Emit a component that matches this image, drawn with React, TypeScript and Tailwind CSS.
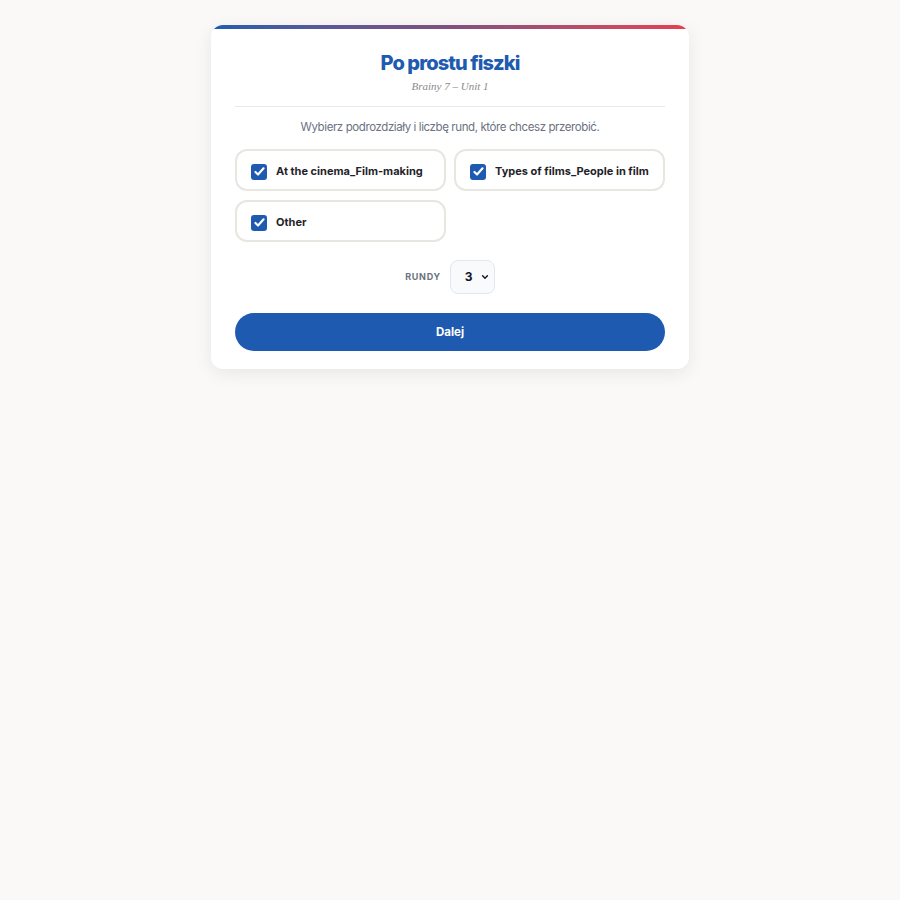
import React, { useState } from "react";

const sections = ["At the cinema_Film-making", "Types of films_People in film", "Other"];

const App = () => {
  const [checked, setChecked] = useState<boolean[]>([true, true, true]);
  const [rounds, setRounds] = useState("3");

  const toggle = (i: number) => {
    setChecked((prev) => prev.map((v, j) => (j === i ? !v : v)));
  };

  return (
    <div
      className="min-h-screen bg-[#faf9f7] pt-[25px]"
      style={{ fontFamily: "Inter, 'Noto Sans', sans-serif" }}
    >
      <div className="mx-auto w-[478px] overflow-hidden rounded-xl bg-white shadow-[0_4px_18px_rgba(0,0,0,0.08)]">
        <div className="h-1 bg-gradient-to-r from-[#1e5bb0] via-[#81507e] to-[#e63e50]" />
        <div className="px-6 pb-[18px]">
          <h1 className="mt-5 text-center text-[20px] font-extrabold leading-7 tracking-[-0.045em] text-[#1e5bb0]">
            Po prostu fiszki
          </h1>
          <p
            className="mt-px text-center text-[11px] italic leading-4 text-[#8a8a8a]"
            style={{ fontFamily: "'Liberation Serif', serif" }}
          >
            Brainy 7 – Unit 1
          </p>
          <div className="mt-3 border-t border-[#ebe9e5]" />
          <p className="mt-[10px] text-center text-[11.5px] leading-5 tracking-[-0.035em] text-[#6b7280]">
            Wybierz podrozdziały i liczbę rund, które chcesz przerobić.
          </p>

          <div className="mt-3 grid grid-cols-2 gap-x-2 gap-y-[9px]">
            {sections.map((s, i) => (
              <button
                key={s}
                type="button"
                onClick={() => toggle(i)}
                className="flex h-[42px] items-center gap-[9px] rounded-xl border-2 border-[#e8e6e1] bg-white pl-[14px] pt-[3px] text-left"
              >
                <span
                  className={
                    checked[i]
                      ? "flex h-4 w-4 shrink-0 items-center justify-center rounded-[3px] bg-[#1e5bb0]"
                      : "flex h-4 w-4 shrink-0 items-center justify-center rounded-[3px] border border-gray-400 bg-white"
                  }
                >
                  {checked[i] && (
                    <svg viewBox="0 0 16 16" className="h-[13px] w-[13px]" fill="none">
                      <path
                        d="M3 8.5l3.2 3.2L13 4"
                        stroke="white"
                        strokeWidth="2.6"
                        strokeLinecap="round"
                        strokeLinejoin="round"
                      />
                    </svg>
                  )}
                </span>
                <span className="whitespace-nowrap text-[11px] font-bold text-[#1f2329]">{s}</span>
              </button>
            ))}
          </div>

          <div className="mt-[18px] flex items-center justify-center gap-[9px]">
            <span className="text-[9px] font-bold tracking-[0.08em] text-[#6b7280]">RUNDY</span>
            <div className="relative">
              <select
                value={rounds}
                onChange={(e) => setRounds(e.target.value)}
                className="h-[34px] w-[45px] appearance-none rounded-lg border border-[#dfe8f5] bg-[#f9fafb] pl-[14px] text-[12px] font-bold text-[#111827] outline-none"
              >
                {[1, 2, 3, 4, 5].map((n) => (
                  <option key={n} value={String(n)}>
                    {n}
                  </option>
                ))}
              </select>
              <svg
                viewBox="0 0 10 10"
                className="pointer-events-none absolute right-[6px] top-[13px] h-[8px] w-[8px]"
                fill="none"
              >
                <path d="M2 3.5l3 3 3-3" stroke="#111827" strokeWidth="1.8" strokeLinecap="round" strokeLinejoin="round" />
              </svg>
            </div>
          </div>

          <button
            type="button"
            className="mt-[19px] h-[38px] w-full rounded-full bg-[#1e5bb0] pt-[2px] text-[11.5px] font-bold text-white"
          >
            Dalej
          </button>
        </div>
      </div>
    </div>
  );
};

export default App;
